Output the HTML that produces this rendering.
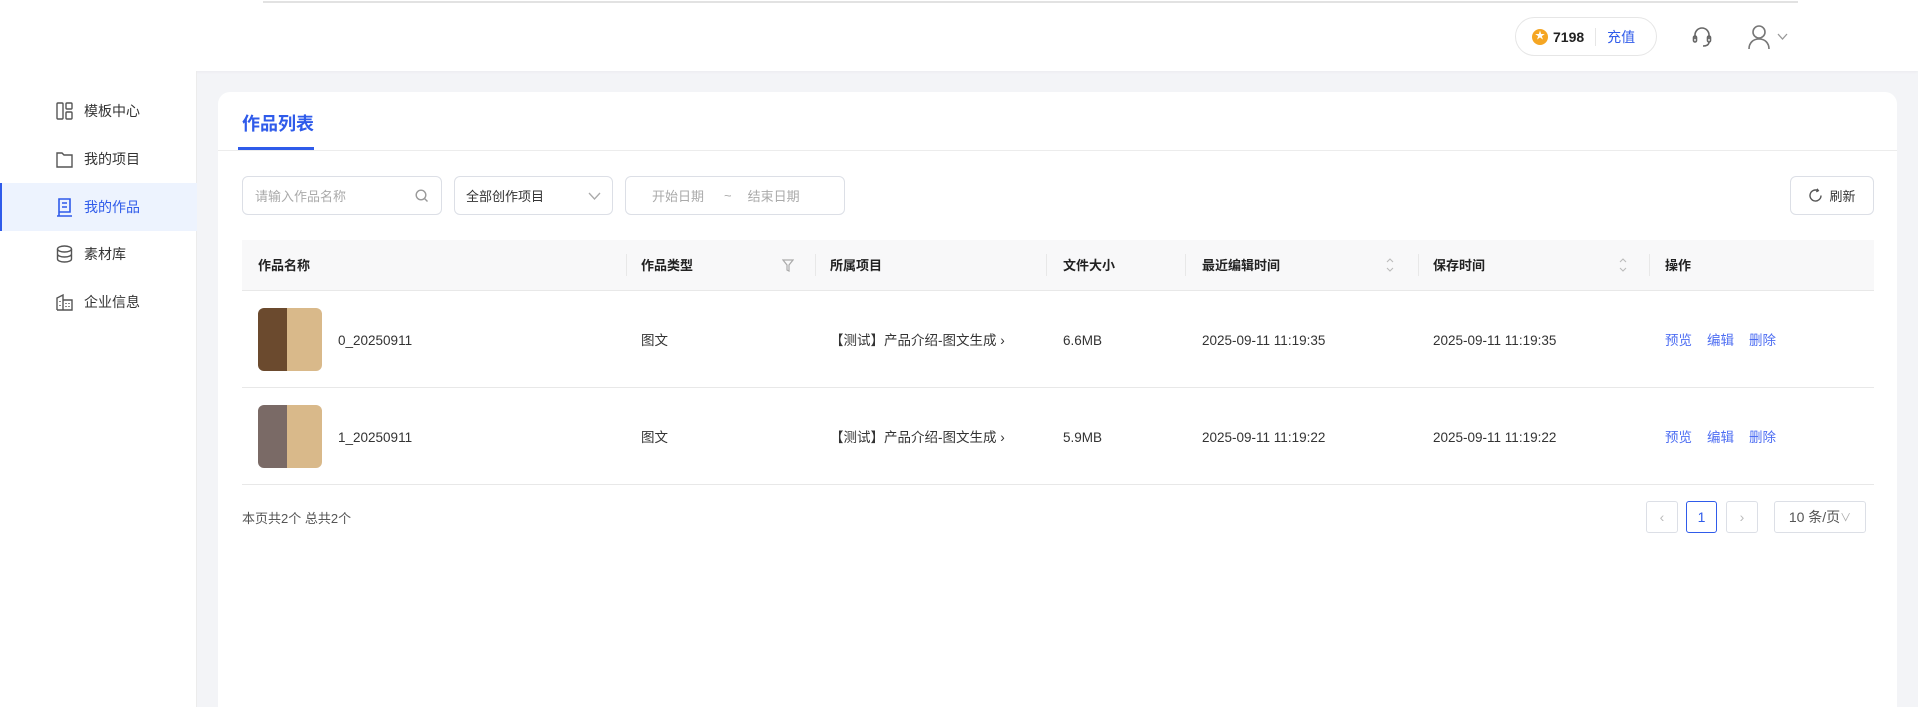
<!DOCTYPE html>
<html><head><meta charset="utf-8"><style>
*{box-sizing:border-box;margin:0;padding:0}
html,body{width:1918px;height:707px;overflow:hidden}
body{background:#f3f4f7;font-family:"Liberation Sans","Noto Sans CJK SC",sans-serif;color:#333;font-size:14px;position:relative}
.abs{position:absolute}
.header{left:0;top:0;width:1918px;height:71px;background:#fff;box-shadow:0 1px 3px rgba(0,0,0,.04)}
.topline{left:263px;top:1px;width:1535px;height:2px;background:#e2e2e2}
.side{left:0;top:71px;width:197px;height:636px;background:#fff;border-right:1px solid #ececec}
.item{position:absolute;left:0;width:197px;height:48px;display:flex;align-items:center;padding-left:56px;font-size:14px;color:#333}
.item svg{margin-right:11px}
.item.act{background:#edf3fe;color:#2f5bea;border-left:2px solid #2f5bea;padding-left:54px}
.card{left:218px;top:92px;width:1679px;height:615px;background:#fff;border-radius:12px 12px 0 0}
.inp{border:1px solid #dcdfe6;border-radius:6px;height:39px;display:flex;align-items:center;font-size:13px;color:#aaa}
.th{position:absolute;top:0;height:51px;line-height:51px;font-weight:bold;font-size:13px;color:#222}
.div{position:absolute;top:14px;width:1px;height:22px;background:#e8e8e8}
.cell{position:absolute;font-size:13.5px;color:#333;height:20px;line-height:20px;top:40px;white-space:nowrap}
.blue{color:#4e6ef2}
.pg{border:1px solid #dcdfe6;border-radius:3px;height:32px;display:flex;align-items:center;justify-content:center;font-size:14px;color:#bbb}
.thumb{position:absolute;left:16px;width:64px;height:63px;border-radius:6px;overflow:hidden;background:linear-gradient(90deg,#6b4a2e 0 45%,#d9b98a 45% 100%)}
</style></head><body>
<div class="abs header"></div>
<div class="abs topline"></div>
<div class="abs" style="left:1515px;top:17px;width:142px;height:39px;border:1px solid #e6e6e6;border-radius:20px;display:flex;align-items:center;padding-left:16px;font-size:14px">
<span style="width:16px;height:16px;border-radius:50%;background:#f5a623;display:inline-block;color:#fff;font-size:10px;text-align:center;line-height:16px">★</span>
<b style="margin-left:5px;color:#222">7198</b><span style="width:1px;height:18px;background:#e6e6e6;margin:0 11px"></span><span class="blue" style="color:#2f5bea">充值</span></div>
<svg class="abs" style="left:1690px;top:24px" width="24" height="26" viewBox="0 0 24 26" fill="none" stroke="#666" stroke-width="1.6"><path d="M5 15V11a7 7 0 0 1 14 0v4"/><rect x="3.5" y="12" width="3" height="6" rx="1.5"/><rect x="17.5" y="12" width="3" height="6" rx="1.5"/><path d="M19 18c0 3-3 4-6 4"/></svg>
<svg class="abs" style="left:1746px;top:23px" width="26" height="28" viewBox="0 0 26 28" fill="none" stroke="#777" stroke-width="1.6"><circle cx="13" cy="9" r="6"/><path d="M3 26c0-6 4-10 10-10s10 4 10 10"/></svg>
<svg class="abs" style="left:1777px;top:33px" width="11" height="8" viewBox="0 0 11 8" fill="none" stroke="#999" stroke-width="1.3"><path d="M1 1l4.5 5L10 1"/></svg>

<div class="abs side">
<div class="item" style="top:16px"><svg width="17" height="18" viewBox="0 0 17 18" fill="none" stroke="#555" stroke-width="1.4"><rect x="1" y="1" width="6" height="16" rx="1"/><rect x="10" y="1" width="6" height="6" rx="1"/><rect x="10" y="10" width="6" height="7" rx="1"/></svg>模板中心</div>
<div class="item" style="top:64px"><svg width="17" height="17" viewBox="0 0 17 17" fill="none" stroke="#555" stroke-width="1.4"><path d="M1 2h5l2 2h8v12H1z"/></svg>我的项目</div>
<div class="item act" style="top:112px"><svg width="17" height="19" viewBox="0 0 17 19" fill="none" stroke="#2f5bea" stroke-width="1.6"><path d="M3 1h11v13H3zM1 18h15M6 5h5M6 9h5M3 14v4"/></svg>我的作品</div>
<div class="item" style="top:159px"><svg width="17" height="18" viewBox="0 0 17 18" fill="none" stroke="#555" stroke-width="1.4"><ellipse cx="8.5" cy="4" rx="7" ry="3"/><path d="M1.5 4v10c0 1.7 3 3 7 3s7-1.3 7-3V4M1.5 9c0 1.7 3 3 7 3s7-1.3 7-3"/></svg>素材库</div>
<div class="item" style="top:207px"><svg width="17" height="18" viewBox="0 0 17 18" fill="none" stroke="#555" stroke-width="1.4"><path d="M1 17V5l6-3v15M7 7h9v10H1M4 8v1M4 12v1M10 10v1M13 10v1M10 13v1M13 13v1"/></svg>企业信息</div>
</div>

<div class="abs card">
<div class="abs" style="left:24px;top:18px;font-size:18px;font-weight:bold;color:#2f5bea">作品列表</div>
<div class="abs" style="left:20px;top:55px;width:76px;height:3px;background:#2f5bea"></div>
<div class="abs" style="left:0;top:58px;width:1679px;height:1px;background:#ececec"></div>

<div class="abs inp" style="left:24px;top:84px;width:200px;padding-left:12px">请输入作品名称<svg style="margin-left:auto;margin-right:12px" width="14" height="14" viewBox="0 0 14 14" fill="none" stroke="#999" stroke-width="1.4"><circle cx="6" cy="6" r="4.8"/><path d="M9.5 9.5l3 3"/></svg></div>
<div class="abs inp" style="left:236px;top:84px;width:159px;padding-left:11px;color:#333">全部创作项目<svg style="margin-left:auto;margin-right:11px" width="13" height="8" viewBox="0 0 13 8" fill="none" stroke="#aaa" stroke-width="1.3"><path d="M1 1l5.5 6L12 1"/></svg></div>
<div class="abs inp" style="left:407px;top:84px;width:220px;padding-left:26px">开始日期<span style="margin:0 16px 0 20px">~</span>结束日期</div>
<div class="abs inp" style="left:1572px;top:84px;width:84px;justify-content:center;color:#333"><svg width="15" height="15" viewBox="0 0 15 15" fill="none" stroke="#555" stroke-width="1.4" style="margin-right:6px"><path d="M13 7.5A5.5 5.5 0 1 1 9.5 2.4M9 0.8l1.3 1.8-2 1.1"/></svg>刷新</div>

<div class="abs" style="left:24px;top:148px;width:1632px;height:51px;background:#f8f8f9;border-bottom:1px solid #e8e8e8">
<div class="th" style="left:16px">作品名称</div>
<div class="div" style="left:384px"></div><div class="th" style="left:399px">作品类型</div>
<svg class="abs" style="left:540px;top:19px" width="12" height="13" viewBox="0 0 12 13" fill="none" stroke="#aaa" stroke-width="1.2"><path d="M1 1h10L7 6v6L5 11V6z"/></svg>
<div class="div" style="left:573px"></div><div class="th" style="left:588px">所属项目</div>
<div class="div" style="left:804px"></div><div class="th" style="left:821px">文件大小</div>
<div class="div" style="left:943px"></div><div class="th" style="left:960px">最近编辑时间</div>
<svg class="abs" style="left:1144px;top:15px" width="8" height="20" viewBox="0 0 8 20" fill="none" stroke="#bbb" stroke-width="1.1"><path d="M1 7l3-3 3 3M1 13l3 3 3-3"/></svg>
<div class="div" style="left:1176px"></div><div class="th" style="left:1191px">保存时间</div>
<svg class="abs" style="left:1377px;top:15px" width="8" height="20" viewBox="0 0 8 20" fill="none" stroke="#bbb" stroke-width="1.1"><path d="M1 7l3-3 3 3M1 13l3 3 3-3"/></svg>
<div class="div" style="left:1407px"></div><div class="th" style="left:1423px">操作</div>
</div>

<div class="abs" style="left:24px;top:199px;width:1632px;height:97px;border-bottom:1px solid #e8e8e8">
<div class="thumb" style="top:17px"></div>
<div class="cell" style="left:96px">0_20250911</div>
<div class="cell" style="left:399px">图文</div>
<div class="cell" style="left:588px">【测试】产品介绍-图文生成 ›</div>
<div class="cell" style="left:821px">6.6MB</div>
<div class="cell" style="left:960px">2025-09-11 11:19:35</div>
<div class="cell" style="left:1191px">2025-09-11 11:19:35</div>
<div class="cell blue" style="left:1423px">预览&nbsp;&nbsp;&nbsp;&nbsp;编辑&nbsp;&nbsp;&nbsp;&nbsp;删除</div>
</div>
<div class="abs" style="left:24px;top:296px;width:1632px;height:97px;border-bottom:1px solid #e8e8e8">
<div class="thumb" style="top:17px;background:linear-gradient(90deg,#7a6a66 0 45%,#d9b98a 45% 100%)"></div>
<div class="cell" style="left:96px">1_20250911</div>
<div class="cell" style="left:399px">图文</div>
<div class="cell" style="left:588px">【测试】产品介绍-图文生成 ›</div>
<div class="cell" style="left:821px">5.9MB</div>
<div class="cell" style="left:960px">2025-09-11 11:19:22</div>
<div class="cell" style="left:1191px">2025-09-11 11:19:22</div>
<div class="cell blue" style="left:1423px">预览&nbsp;&nbsp;&nbsp;&nbsp;编辑&nbsp;&nbsp;&nbsp;&nbsp;删除</div>
</div>

<div class="abs" style="left:24px;top:416px;font-size:13px;color:#555">本页共2个 总共2个</div>
<div class="abs pg" style="left:1428px;top:409px;width:32px">‹</div>
<div class="abs pg" style="left:1468px;top:409px;width:31px;border-color:#2f5bea;color:#2f5bea">1</div>
<div class="abs pg" style="left:1508px;top:409px;width:32px">›</div>
<div class="abs pg" style="left:1556px;top:409px;width:92px;color:#555">10 条/页<span style="color:#aaa;font-size:11px">∨</span></div>
</div>
</body></html>
